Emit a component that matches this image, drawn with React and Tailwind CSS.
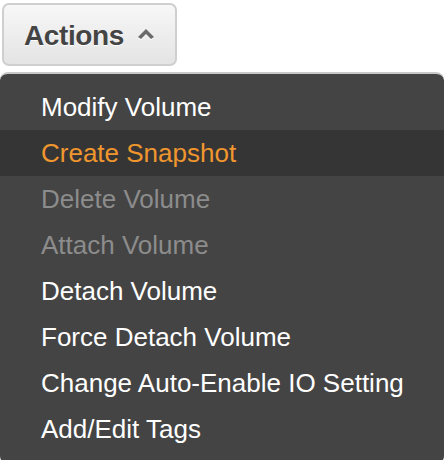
import React from 'react'

const items = [
  { label: 'Modify Volume' },
  { label: 'Create Snapshot', active: true },
  { label: 'Delete Volume', disabled: true },
  { label: 'Attach Volume', disabled: true },
  { label: 'Detach Volume' },
  { label: 'Force Detach Volume' },
  { label: 'Change Auto-Enable IO Setting' },
  { label: 'Add/Edit Tags' },
]

function App() {
  return (
    <div className="w-[444px] h-[460px] bg-white overflow-hidden font-['Liberation_Sans',Arial,sans-serif]">
      <div className="pt-[3px] pl-[2px]">
        <button className="w-[175px] h-[63px] flex items-center pl-[20px] gap-[13px] rounded-[7px] border-2 border-[#cfcfcf] bg-gradient-to-b from-[#f7f7f7] to-[#e4e4e4]">
          <span className="text-[28px] font-bold text-[#444] [text-shadow:0_1px_0_#fff] tracking-[-0.4px] mt-[3px]">Actions</span>
          <svg width="18" height="12" viewBox="0 0 18 12" className="mt-[-1px]">
            <path d="M9 1 L17 9 L14 11 L9 6 L4 11 L1 9 Z" fill="#fff" transform="translate(0 1)" />
            <path d="M9 1 L17 9 L14 11 L9 6 L4 11 L1 9 Z" fill="#6a6a6a" />
          </svg>
        </button>
      </div>

      <div className="mt-[6px] w-[444px] h-[392px] rounded-[8px] bg-[#444] border-t-2 border-[#c9c9c9] pt-[10px]">
        {items.map((item, i) => (
          <div
            key={i}
            className={`h-[46px] flex items-center pl-[41px] text-[26px] ${
              item.active ? 'bg-[#353535] text-[#f0962e]' : item.disabled ? 'text-[#8c8c8c]' : 'text-white'
            }`}
          >
            {item.label}
          </div>
        ))}
      </div>
    </div>
  )
}

export default App
